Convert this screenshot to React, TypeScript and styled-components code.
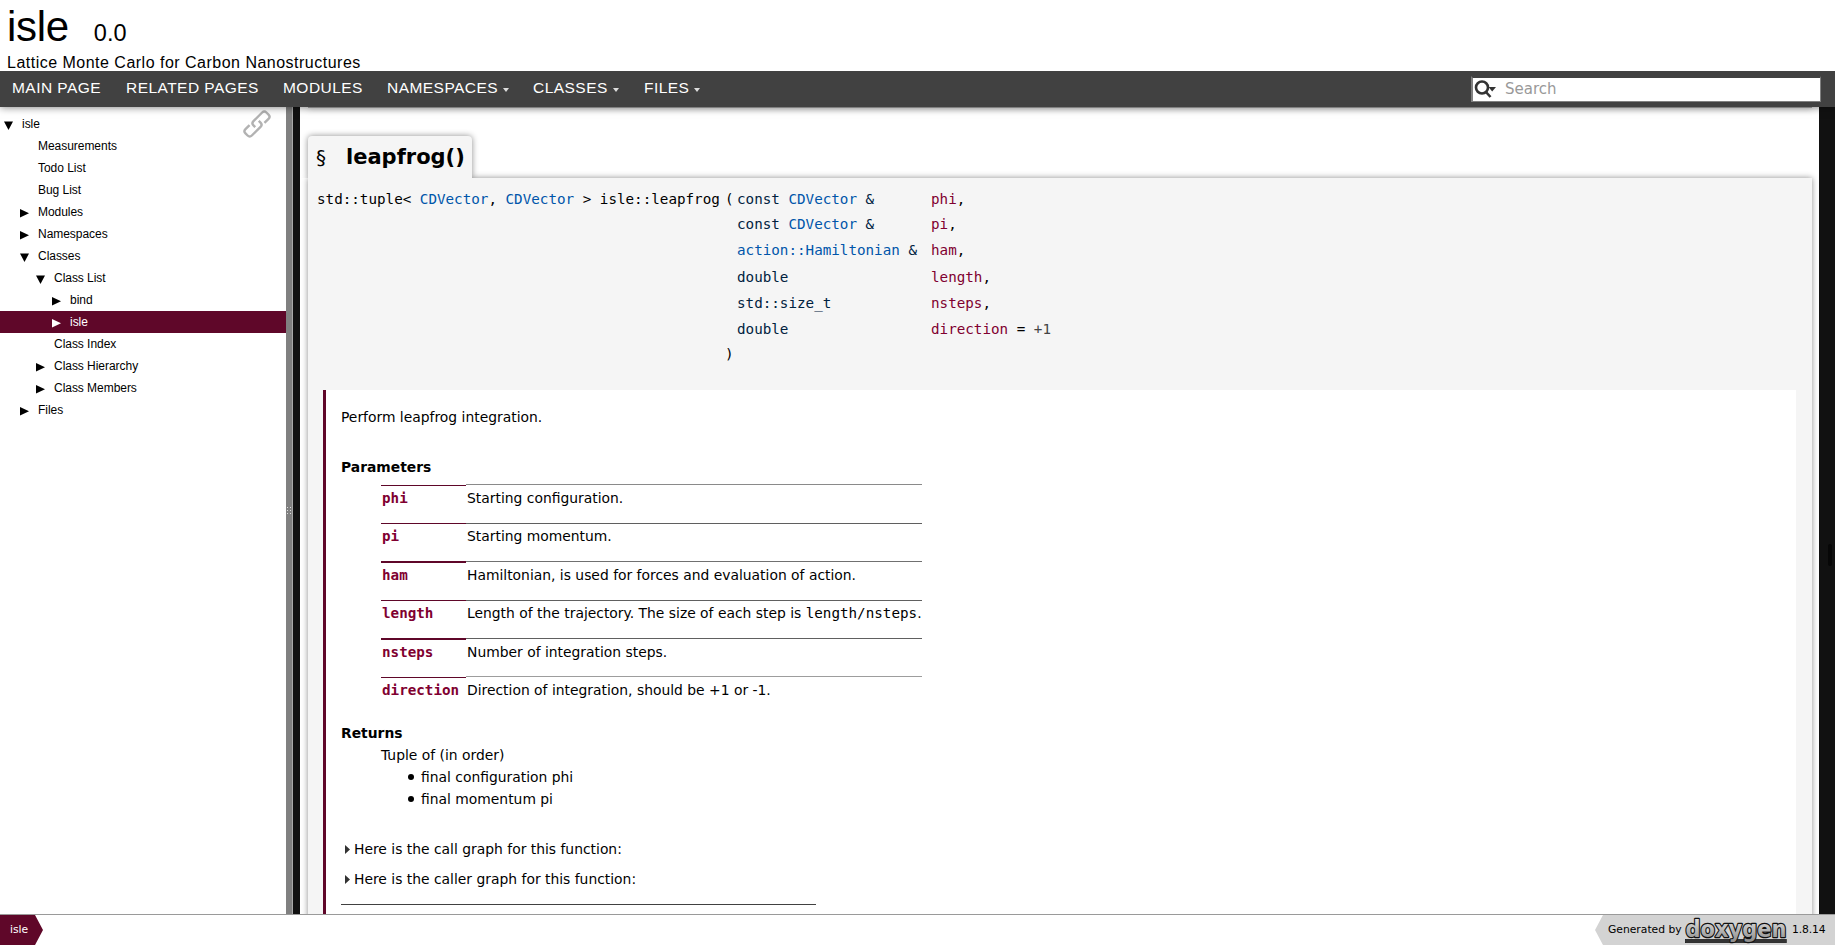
import React from "react";
import styled, { createGlobalStyle } from "styled-components";

const MAROON = "#5f0729";

const GlobalStyle = createGlobalStyle`
  * { box-sizing: border-box; }
  html, body { margin: 0; padding: 0; background: #fff; overflow: hidden; }
  body { font-family: "DejaVu Sans", sans-serif; font-size: 13.88px; line-height: 22px; color: #000; }
`;

const Page = styled.div`
  width: 1835px;
  height: 945px;
  display: flex;
  flex-direction: column;
  overflow: hidden;
`;

const Header = styled.header`
  height: 71px;
  flex: none;
  padding-left: 7px;
  font-family: "Liberation Sans", sans-serif;
  white-space: nowrap;
`;
const ProjectLine = styled.div`
  height: 53px;
  display: flex;
  align-items: baseline;
  line-height: 53px;
`;
const ProjectName = styled.span`
  font-size: 42px;
  letter-spacing: -0.3px;
`;
const ProjectNumber = styled.span`
  font-size: 23.5px;
  margin-left: 25px;
`;
const Brief = styled.div`
  font-size: 16px;
  line-height: 20px;
  letter-spacing: 0.49px;
`;

const NavBar = styled.nav`
  height: 36px;
  flex: none;
  display: flex;
  align-items: center;
  background: #414141;
  box-shadow: 0 0 8px rgba(0, 0, 0, 0.55);
  clip-path: inset(0 0 -12px 0);
  position: relative;
  z-index: 2;
`;
const NavItem = styled.a<{ $width: number }>`
  width: ${(p) => p.$width}px;
  padding-left: 12px;
  display: flex;
  align-items: center;
  font: 15.5px/32px "Liberation Sans", sans-serif;
  letter-spacing: 0.46px;
  color: #fff;
  white-space: nowrap;
  height: 36px;
  padding-bottom: 2px;
`;
const Caret = styled.i`
  border: 3.5px solid transparent;
  border-top: 4px solid #ddd;
  border-bottom: 0;
  margin: 3px 0 0 5px;
`;
const SearchBox = styled.div`
  margin-left: auto;
  margin-right: 14px;
  width: 350px;
  height: 26px;
  border: solid;
  border-color: #414141 #808080 #808080 #808080;
  border-width: 2px 1px 1px 2px;
  background: #fff;
  display: flex;
  align-items: center;
  padding-left: 1px;
  font-size: 15px;
  color: #999;
`;
const SearchText = styled.span`
  margin: -1px 0 0 9px;
`;

const Main = styled.div`
  flex: 1;
  min-height: 0;
  display: flex;
`;
const Tree = styled.aside`
  width: 286px;
  flex: none;
  padding-top: 6px;
  position: relative;
  font: 12px/22px "Liberation Sans", sans-serif;
  letter-spacing: -0.04px;
`;
const TreeRow = styled.div<{ $level: number; $selected?: boolean }>`
  height: 22px;
  display: flex;
  align-items: center;
  padding-left: ${(p) => 4 + p.$level * 16}px;
  background: ${(p) => (p.$selected ? MAROON : "transparent")};
  color: ${(p) => (p.$selected ? "#fff" : "#000")};
`;
const ArrowCell = styled.span`
  width: 18px;
  height: 22px;
  flex: none;
  display: flex;
  align-items: center;
  padding-top: 2px;
`;
const TreeLabel = styled.span`
  white-space: nowrap;
`;
const SyncIcon = styled.svg`
  position: absolute;
  left: 243px;
  top: 3px;
`;
const Splitter = styled.div`
  width: 14px;
  flex: none;
  background: linear-gradient(90deg, #808080 0 6px, #a9a9a9 6px 7px, #111 7px);
  display: flex;
  align-items: center;
`;
const Content = styled.main`
  flex: 1;
  padding: 0 7px 0 8px;
  overflow: hidden;
`;
const ScrollTrack = styled.div`
  width: 16px;
  flex: none;
  background: #111;
  display: flex;
  justify-content: flex-end;
  padding: 437px 3px 0 0;
`;
const ScrollThumb = styled.div`
  width: 4px;
  height: 22px;
  border-radius: 2px;
  background: #070707;
`;

const PreviousMember = styled.section`
  height: 1px;
  background: #aaa;
  box-shadow: 0 0 6px rgba(0, 0, 0, 0.7);
`;
const MemberTab = styled.h2`
  margin: 28px 0 0;
  width: 164px;
  height: 42px;
  display: flex;
  padding-left: 8px;
  border-radius: 4px 4px 0 0;
  background: #f5f5f5;
  box-shadow: 0 0 6px rgba(0, 0, 0, 0.45);
  clip-path: inset(-8px -8px 0 -8px);
  font-size: 21px;
  line-height: 43px;
`;
const Permalink = styled.span`
  width: 30px;
  font-weight: 400;
  font-size: 20px;
`;
const MemberBox = styled.section`
  height: 900px;
  background: #f5f5f5;
  box-shadow: 0 0 6px rgba(0, 0, 0, 0.45);
  padding: 10px 16px 0 15px;
`;
const TabSeam = styled.div`
  height: 10px;
  width: 164px;
  margin: -18px 0 8px -15px;
  position: relative;
  background: #f5f5f5;
`;
const Prototype = styled.div`
  margin-left: -6px;
  height: 202px;
  font-family: "DejaVu Sans Mono", monospace;
  font-size: 14.24px;
`;
const ProtoRow = styled.div<{ $h: number }>`
  height: ${(p) => p.$h}px;
  display: grid;
  grid-template-columns: 408px 12px 194px auto;
  white-space: pre;
`;
const ProtoType = styled.span`
  color: #00223f;
`;
const TypeLink = styled.a`
  color: #0055aa;
`;
const ParamName = styled.em`
  font-style: normal;
  color: #800030;
`;
const DefaultValue = styled.span`
  color: #444;
`;
const Doc = styled.div`
  border-left: 3px solid ${MAROON};
  background: #fff;
  padding: 16px 0 0 15px;
  height: 700px;
`;
const Paragraph = styled.p<{ $gap: number }>`
  margin: 0 0 ${(p) => p.$gap}px;
`;
const Term = styled.div`
  font-weight: 700;
`;
const ParamTable = styled.div`
  margin: 6px 0 7px 40px;
  width: 541px;
`;
const ParamRow = styled.div<{ $h: number }>`
  height: ${(p) => p.$h}px;
  display: grid;
  grid-template-columns: 85px auto;
`;
const ParamKey = styled.code<{ $rule: number; $offset: number; $lift: number }>`
  font: bold 14.24px/22px "DejaVu Sans Mono", monospace;
  color: #800030;
  margin-top: ${(p) => p.$offset}px;
  border-top: ${(p) => p.$rule}px solid ${MAROON};
  padding: ${(p) => 3 - p.$rule - p.$offset - p.$lift}px 0 0 1px;
`;
const ParamText = styled.div<{ $tone: string; $lift: number }>`
  border-top: 1px solid ${(p) => p.$tone};
  padding: ${(p) => 2 - p.$lift}px 0 0 1px;
  white-space: nowrap;
`;
const Code = styled.code`
  font: 14.24px "DejaVu Sans Mono", monospace;
`;
const ReturnBlock = styled.div`
  margin-left: 40px;
`;
const ReturnItem = styled.div`
  display: flex;
  align-items: center;
  padding-left: 27px;
  &::before {
    content: "";
    width: 6px;
    height: 6px;
    border-radius: 3px;
    background: #000;
    margin-right: 7px;
  }
`;
const GraphToggle = styled.div<{ $top: number }>`
  margin-top: ${(p) => p.$top}px;
  display: flex;
  align-items: center;
  padding-left: 4px;
  svg { margin-right: 4px; }
`;
const Rule = styled.hr`
  width: 475px;
  height: 1px;
  border: 0;
  background: #414141;
  margin: 14px 0 0;
`;

const Footer = styled.footer`
  height: 31px;
  flex: none;
  border-top: 1px solid #9a9a9a;
  background: #fff;
  display: flex;
  justify-content: space-between;
  font-size: 10.75px;
  line-height: 30px;
  position: relative;
`;
const Crumb = styled.div`
  width: 43px;
  padding-left: 10px;
  background: ${MAROON};
  color: #fff;
  clip-path: polygon(0 0, 35px 0, 43px 15px, 35px 30px, 0 30px);
`;
const Generated = styled.div`
  width: 240px;
  display: flex;
  padding-left: 13px;
  background: #d3d3d3;
  clip-path: polygon(8px 0, 100% 0, 100% 100%, 8px 100%, 0 15px);
  white-space: nowrap;
`;
const GeneratedText = styled.span`
  width: 76px;
`;
const Version = styled.span`
  margin-left: 4px;
  letter-spacing: -0.1px;
`;

type Node = { label: string; level: number; arrow?: "open" | "closed"; selected?: boolean };
const tree: Node[] = [
  { label: "isle", level: 0, arrow: "open" },
  { label: "Measurements", level: 1 },
  { label: "Todo List", level: 1 },
  { label: "Bug List", level: 1 },
  { label: "Modules", level: 1, arrow: "closed" },
  { label: "Namespaces", level: 1, arrow: "closed" },
  { label: "Classes", level: 1, arrow: "open" },
  { label: "Class List", level: 2, arrow: "open" },
  { label: "bind", level: 3, arrow: "closed" },
  { label: "isle", level: 3, arrow: "closed", selected: true },
  { label: "Class Index", level: 2 },
  { label: "Class Hierarchy", level: 2, arrow: "closed" },
  { label: "Class Members", level: 2, arrow: "closed" },
  { label: "Files", level: 1, arrow: "closed" },
];

const TreeArrow = ({ kind }: { kind: "open" | "closed" }) => (
  <svg width="9" height="9" viewBox="0 0 9 9" fill="currentColor">
    <path d={kind === "open" ? "M0 0.5H9L4.5 9Z" : "M0 0V8.6L9 4.3Z"} />
  </svg>
);

const menu = [
  { label: "MAIN PAGE", width: 114 },
  { label: "RELATED PAGES", width: 157 },
  { label: "MODULES", width: 104 },
  { label: "NAMESPACES", width: 146, caret: true },
  { label: "CLASSES", width: 111, caret: true },
  { label: "FILES", width: 80, caret: true },
];

const proto = [
  { h: 25, type: <>const <TypeLink>CDVector</TypeLink> &amp;</>, name: "phi" },
  { h: 26, type: <>const <TypeLink>CDVector</TypeLink> &amp;</>, name: "pi" },
  { h: 27, type: <><TypeLink>action::Hamiltonian</TypeLink> &amp;</>, name: "ham" },
  { h: 26, type: <>double</>, name: "length" },
  { h: 26, type: <>std::size_t</>, name: "nsteps" },
  { h: 25, type: <>double</>, name: "direction", value: "+1" },
];

const params = [
  { name: "phi", text: <>Starting configuration.</>, h: 39, rule: 1, offset: 1, lift: 0, tone: "#8a8a8a" },
  { name: "pi", text: <>Starting momentum.</>, h: 38, rule: 1, offset: 0, lift: 1, tone: "#5f5f5f" },
  { name: "ham", text: <>Hamiltonian, is used for forces and evaluation of action.</>, h: 39, rule: 2, offset: 0, lift: 0, tone: "#707070" },
  { name: "length", text: <>Length of the trajectory. The size of each step is <Code>length/nsteps</Code>.</>, h: 38, rule: 1, offset: 0, lift: 1, tone: "#606060" },
  { name: "nsteps", text: <>Number of integration steps.</>, h: 38, rule: 2, offset: 0, lift: 0, tone: "#606060" },
  { name: "direction", text: <>Direction of integration, should be +1 or -1.</>, h: 39, rule: 1, offset: 1, lift: 0, tone: "#9d9d9d" },
];

const ToggleArrow = () => (
  <svg width="5" height="9" viewBox="0 0 5 9"><path d="M0 0L5 4.5L0 9Z" fill="#333" /></svg>
);

const DoxygenLogo = () => (
  <svg width="104" height="30" viewBox="0 0 104 30" overflow="visible">
    <defs>
      <linearGradient id="metal" x1="0" y1="0" x2="0" y2="1">
        <stop offset="0" stopColor="#e8e8e8" />
        <stop offset="1" stopColor="#8c8c8c" />
      </linearGradient>
    </defs>
    <rect x="1.3" y="24.3" width="101" height="3.4" fill="#333" stroke="#111" strokeWidth="0.6" />
    <text x="1.5" y="21.8" textLength="101" lengthAdjust="spacingAndGlyphs" fontFamily="DejaVu Sans" fontWeight="700" fontSize="23" fill="url(#metal)" stroke="#111" strokeWidth="2.4" strokeLinejoin="round" paintOrder="stroke">doxygen</text>
  </svg>
);

export default function App() {
  return (
    <Page>
      <GlobalStyle />
      <Header>
        <ProjectLine>
          <ProjectName>isle</ProjectName>
          <ProjectNumber>0.0</ProjectNumber>
        </ProjectLine>
        <Brief>Lattice Monte Carlo for Carbon Nanostructures</Brief>
      </Header>
      <NavBar>
        {menu.map((m) => (
          <NavItem key={m.label} $width={m.width}>
            {m.label}
            {m.caret && <Caret />}
          </NavItem>
        ))}
        <SearchBox>
          <svg width="22" height="19" viewBox="0 0 22 19">
            <circle cx="8" cy="7.5" r="6" fill="none" stroke="#333" strokeWidth="2.6" />
            <path d="M11.5 11.5L16.5 17" stroke="#333" strokeWidth="2.6" />
            <path d="M14.5 7H22L18.2 11.5Z" fill="#333" />
          </svg>
          <SearchText>Search</SearchText>
        </SearchBox>
      </NavBar>
      <Main>
        <Tree>
          {tree.map((n, i) => (
            <TreeRow key={i} $level={n.level} $selected={n.selected}>
              <ArrowCell>{n.arrow && <TreeArrow kind={n.arrow} />}</ArrowCell>
              <TreeLabel>{n.label}</TreeLabel>
            </TreeRow>
          ))}
          <SyncIcon width="28" height="28" viewBox="0 0 28 28" fill="none" stroke="#b2b2b2" strokeWidth="2.4">
            <g transform="rotate(-45 14 14)">
              <path d="M8 9.5H2.2Q-0.8 9.5 -0.8 12.5V15.5Q-0.8 18.5 2.2 18.5H14.5Q17.5 18.5 17.5 15.5V13" />
              <path d="M20 18.5H25.8Q28.8 18.5 28.8 15.5V12.5Q28.8 9.5 25.8 9.5H13.5Q10.5 9.5 10.5 12.5V15" />
            </g>
          </SyncIcon>
        </Tree>
        <Splitter>
          <svg width="6" height="8" viewBox="0 0 6 8" fill="#ddd">
            <path d="M1 0h1v1H1zM4 0h1v1H4zM1 3h1v1H1zM4 3h1v1H4zM1 6h1v1H1zM4 6h1v1H4z" />
          </svg>
        </Splitter>
        <Content>
          <PreviousMember />
          <MemberTab>
            <Permalink>§</Permalink>leapfrog()
          </MemberTab>
          <MemberBox>
            <TabSeam />
            <Prototype>
              {proto.map((r, i) => (
                <ProtoRow key={r.name} $h={r.h}>
                  <span>
                    {i === 0 && (
                      <>std::tuple&lt; <TypeLink>CDVector</TypeLink>, <TypeLink>CDVector</TypeLink> &gt; isle::leapfrog</>
                    )}
                  </span>
                  <span>{i === 0 && "("}</span>
                  <ProtoType>{r.type}</ProtoType>
                  <span>
                    <ParamName>{r.name}</ParamName>
                    {r.value ? <> = <DefaultValue>{r.value}</DefaultValue></> : ","}
                  </span>
                </ProtoRow>
              ))}
              <ProtoRow $h={25}>
                <span />
                <span>)</span>
              </ProtoRow>
            </Prototype>
            <Doc>
              <Paragraph $gap={28}>Perform leapfrog integration.</Paragraph>
              <Term>Parameters</Term>
              <ParamTable>
                {params.map((p) => (
                  <ParamRow key={p.name} $h={p.h}>
                    <ParamKey $rule={p.rule} $offset={p.offset} $lift={p.lift}>{p.name}</ParamKey>
                    <ParamText $tone={p.tone} $lift={p.lift}>{p.text}</ParamText>
                  </ParamRow>
                ))}
              </ParamTable>
              <Term>Returns</Term>
              <ReturnBlock>
                Tuple of (in order)
                <ReturnItem>final configuration phi</ReturnItem>
                <ReturnItem>final momentum pi</ReturnItem>
              </ReturnBlock>
              <GraphToggle $top={28}><ToggleArrow />Here is the call graph for this function:</GraphToggle>
              <GraphToggle $top={8}><ToggleArrow />Here is the caller graph for this function:</GraphToggle>
              <Rule />
            </Doc>
          </MemberBox>
        </Content>
        <ScrollTrack><ScrollThumb /></ScrollTrack>
      </Main>
      <Footer>
        <Crumb>isle</Crumb>
        <Generated>
          <GeneratedText>Generated by</GeneratedText>
          <DoxygenLogo />
          <Version>1.8.14</Version>
        </Generated>
      </Footer>
    </Page>
  );
}
